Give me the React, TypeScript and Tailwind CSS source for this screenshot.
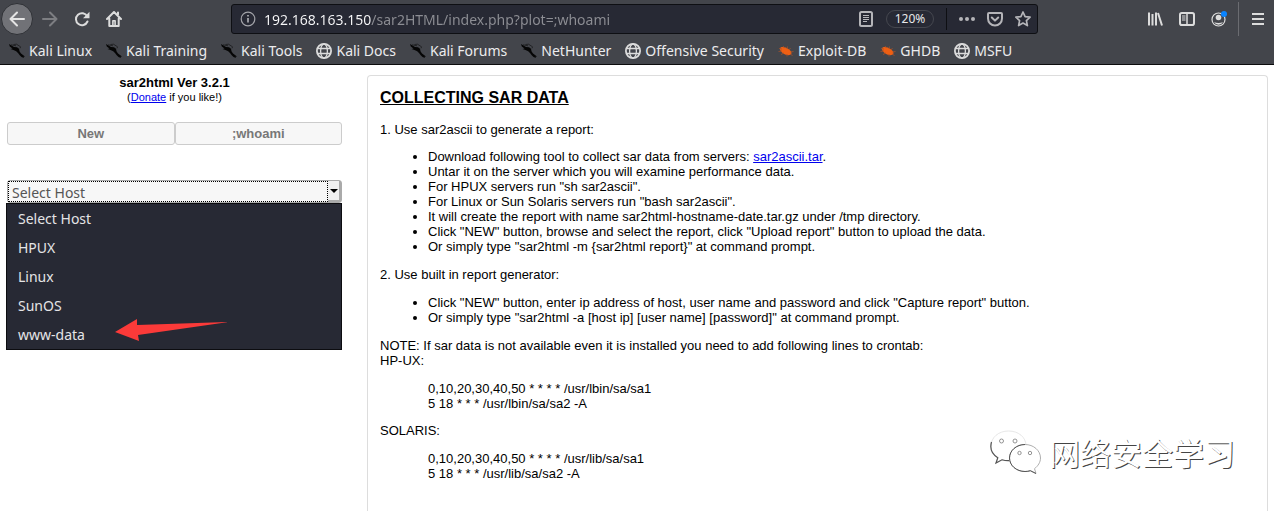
import React from 'react';

type IconKind = 'dragon' | 'globe' | 'bug';

const bookmarks: { label: string; icon: IconKind }[] = [
  { label: 'Kali Linux', icon: 'dragon' },
  { label: 'Kali Training', icon: 'dragon' },
  { label: 'Kali Tools', icon: 'dragon' },
  { label: 'Kali Docs', icon: 'globe' },
  { label: 'Kali Forums', icon: 'dragon' },
  { label: 'NetHunter', icon: 'dragon' },
  { label: 'Offensive Security', icon: 'globe' },
  { label: 'Exploit-DB', icon: 'bug' },
  { label: 'GHDB', icon: 'bug' },
  { label: 'MSFU', icon: 'globe' },
];

const hosts = ['Select Host', 'HPUX', 'Linux', 'SunOS', 'www-data'];

function BookmarkIcon({ kind }: { kind: IconKind }) {
  if (kind === 'globe') {
    return (
      <svg className="size-4 shrink-0" viewBox="0 0 16 16" fill="none" stroke="#dcdcdc" strokeWidth="1.5" aria-hidden="true">
        <circle cx="8" cy="8" r="7.1" strokeWidth="1.8" />
        <ellipse cx="8" cy="8" rx="3.4" ry="7" strokeWidth="1.3" />
        <path d="M1.5 5.5h13M1.5 10.5h13" strokeWidth="1.3" />
      </svg>
    );
  }
  if (kind === 'bug') {
    return (
      <svg className="size-4 shrink-0" viewBox="0 0 16 16" aria-hidden="true">
        <path d="M2.500 4.500C5 3.400 8 4.300 10.500 6c2.200 1.500 3.400 3.200 2.900 4.800-.6 1.500-3.400 1.700-5.600.9C4.900 10.800 1.900 8 2 6z" fill="#ee5f13" />
        <path d="M1 5.500l3 .5M.5 8.500L4 8M3 11.500l3-1.500M5 3l1.500 2M9.500 3.500L9 6M12.500 5L11 7M15.500 8.500l-3 .5M14.500 12.500L12 11M9 13.500L9 11" stroke="#a4522b" strokeWidth=".8" fill="none" />
      </svg>
    );
  }
  return (
    <svg className="size-4 shrink-0" viewBox="0 0 16 16" aria-hidden="true">
      <path d="M0 1l2.500 1.500L5 4l3 .2 2 1.600.5 2.400L12 10.500l4 3-1.500.2.500 1.300-2.500-1-2-2-1.500-2-1.800-1.700L4.500 7 1.500 6l2-.5L.8 3.500z" fill="#050505" />
      <path d="M4.500 1.500l3-.3 2.500 1.600 1.500 1-.5 1.500M2 1.800l5 1" fill="none" stroke="#0c0c0c" strokeWidth=".6" />
    </svg>
  );
}

function ToolButton({ label, children }: { label: string; children: React.ReactNode }) {
  return (
    <button type="button" aria-label={label} className="flex size-8 shrink-0 items-center justify-center">
      {children}
    </button>
  );
}

function Toolbar() {
  return (
    <div className="flex h-[38px] items-center pl-px text-[#dcdcdc]">
      <button type="button" aria-label="Back" className="mr-px flex size-8 shrink-0 items-center justify-center rounded-full border border-[#2f3136] bg-[#717277]">
        <svg className="size-4" viewBox="0 0 16 16" fill="none" stroke="#e4e4e4" strokeWidth="2" strokeLinecap="round" strokeLinejoin="round" aria-hidden="true">
          <path d="M15 8H1.500M8 1.500L1.500 8 8 14.500" />
        </svg>
      </button>
      <ToolButton label="Forward">
        <svg className="size-4" viewBox="0 0 16 16" fill="none" stroke="#7d7e82" strokeWidth="2" strokeLinecap="round" strokeLinejoin="round" aria-hidden="true">
          <path d="M1 8h13.500M8 1.500L14.500 8 8 14.500" />
        </svg>
      </ToolButton>
      <ToolButton label="Reload">
        <svg className="size-4" viewBox="0 0 16 16" fill="none" stroke="currentColor" strokeWidth="2" aria-hidden="true">
          <path d="M13.200 5.200A6 6 0 1 0 13.500 10.500" strokeLinecap="round" />
          <path d="M15.500 .8v6.400H9z" fill="currentColor" stroke="none" />
        </svg>
      </ToolButton>
      <ToolButton label="Home">
        <svg className="size-4" viewBox="0 0 16 16" fill="none" stroke="currentColor" strokeWidth="2" strokeLinecap="round" strokeLinejoin="round" aria-hidden="true">
          <path d="M1 8l7-7 7 7M3.300 7.500V15h9.400V7.500M12 1.500v2" />
          <path d="M6.900 14V9.800h2.200V14" strokeWidth="1.600" />
        </svg>
      </ToolButton>
      <div className="mx-[101px] flex h-[30px] min-w-0 flex-1 items-center rounded-[3px] border border-[#0e0f13] bg-[#272934] pl-2">
        <svg className="mr-2 size-4 shrink-0" viewBox="0 0 16 16" fill="none" stroke="#a3a4a9" strokeWidth="1.200" aria-hidden="true">
          <circle cx="8" cy="8" r="6.800" />
          <path d="M8 7v4.500M8 4v1.600" strokeWidth="1.800" />
        </svg>
        <input
          aria-label="Address"
          defaultValue="192.168.163.150/sar2HTML/index.php?plot=;whoami"
          className="h-7 min-w-0 flex-1 bg-[linear-gradient(90deg,#f9f9fa_107px,#8d8e94_107px)] bg-clip-text text-[14px] text-transparent outline-none"
        />
        <button type="button" aria-label="Reader view" className="mr-3 shrink-0">
          <svg className="size-4" viewBox="0 0 16 16" fill="none" stroke="#b5b5b9" strokeWidth="2" aria-hidden="true">
            <rect x="2" y="1" width="12" height="14" rx="1.500" />
            <path d="M5 4.500h6M5 6.500h6M5 8.500h6M5 10.500h4" strokeWidth="1" />
          </svg>
        </button>
        <button type="button" className="h-[18px] w-12 shrink-0 rounded-full border border-[#45474f] text-[12px] leading-4 text-[#e8e8ea]">120%</button>
        <span className="mx-3 h-[22px] w-px shrink-0 bg-[#0e0f13]" />
        <button type="button" aria-label="Page actions" className="mr-3 shrink-0">
          <svg className="size-4" viewBox="0 0 16 16" fill="#b5b5b9" aria-hidden="true">
            <circle cx="2" cy="8" r="2" />
            <circle cx="8" cy="8" r="2" />
            <circle cx="14" cy="8" r="2" />
          </svg>
        </button>
        <button type="button" aria-label="Save to Pocket" className="mr-3 shrink-0">
          <svg className="size-4" viewBox="0 0 16 16" fill="none" stroke="#b5b5b9" strokeWidth="2" strokeLinecap="round" strokeLinejoin="round" aria-hidden="true">
            <path d="M2 2h12q1 0 1 1v4.500a7 7 0 0 1-14 0V3q0-1 1-1z" />
            <path d="M4.800 6.500L8 9.600l3.200-3.100" />
          </svg>
        </button>
        <button type="button" aria-label="Bookmark this page" className="mr-1.5 shrink-0">
          <svg className="size-4" viewBox="0 0 16 16" fill="none" stroke="#b5b5b9" strokeWidth="1.700" strokeLinejoin="round" aria-hidden="true">
            <path d="M8 1l2.100 4.600 5 .6-3.700 3.400 1 5L8 12.100l-4.400 2.500 1-5L.9 6.200l5-.6z" />
          </svg>
        </button>
      </div>
      <ToolButton label="Library">
        <svg className="size-4" viewBox="0 0 16 16" fill="none" stroke="currentColor" strokeWidth="2" aria-hidden="true">
          <path d="M2 1.500v13M5.500 3v11.500M9 1.500v13M11 2l4 12.500" />
        </svg>
      </ToolButton>
      <ToolButton label="Sidebars">
        <svg className="size-4" viewBox="0 0 16 16" fill="none" stroke="currentColor" strokeWidth="2" aria-hidden="true">
          <rect x="1" y="2" width="14" height="12" rx="1.800" />
          <path d="M8 2v12" strokeWidth="1.500" />
          <path d="M3 5h3.500M3 7h3.500M3 9h3.500" strokeWidth="1" />
        </svg>
      </ToolButton>
      <ToolButton label="Account">
        <svg className="size-4" viewBox="0 0 16 16" fill="none" stroke="currentColor" aria-hidden="true">
          <circle cx="7.500" cy="8.500" r="6.500" strokeWidth="1.200" />
          <circle cx="7.500" cy="6.500" r="2.800" fill="currentColor" stroke="none" />
          <path d="M3 11q1.800 1 4.500 1T12 11q-1.500 2.800-4.500 2.800T3 11z" fill="currentColor" stroke="none" />
          <circle cx="13" cy="3" r="3" fill="#0a84ff" stroke="none" />
        </svg>
      </ToolButton>
      <span className="mx-[3px] h-[34px] w-px shrink-0 bg-[#6b6c71]" />
      <ToolButton label="Open menu">
        <svg className="size-4" viewBox="0 0 16 16" fill="none" stroke="currentColor" strokeWidth="2" aria-hidden="true">
          <path d="M2 3h12M2 8h12M2 13h12" />
        </svg>
      </ToolButton>
    </div>
  );
}

function Bookmarks() {
  return (
    <nav aria-label="Bookmarks" className="flex h-[26px] items-center gap-3.5 pb-px pl-[9px] text-[14px] leading-5 text-[#ececee]">
      {bookmarks.map((b) => (
        <a key={b.label} href="#" className="flex items-center gap-1 whitespace-nowrap">
          <BookmarkIcon kind={b.icon} />
          {b.label}
        </a>
      ))}
    </nav>
  );
}

function HostMenu() {
  return (
    <div className="relative mt-[35px]">
      <div className="flex h-[23px] rounded-[3px] border border-[#aaaaaa] bg-[#f7f7f7]">
        <select aria-label="Host" className="min-w-0 flex-1 appearance-none border border-dotted border-black bg-[#f7f7f7] pl-[3px] text-[14px] text-[#555555] outline-none">
          {hosts.map((h) => (
            <option key={h}>{h}</option>
          ))}
        </select>
        <span className="flex w-[13px] items-center justify-center border-r-2 border-b-2 border-[#aaaaaa] bg-[#f0f0f0]" aria-hidden="true">
          <svg className="h-1 w-2" viewBox="0 0 8 4">
            <path d="M0 0h8L4 4z" fill="#000" />
          </svg>
        </span>
      </div>
      <select aria-label="Start date" disabled className="mt-1.5 block h-[22px] w-full appearance-none rounded-[3px] border border-[#aaaaaa] bg-[#f7f7f7]" />
      <select aria-label="End date" disabled className="mt-1.5 block h-[22px] w-full appearance-none rounded-[3px] border border-[#aaaaaa] bg-[#f7f7f7]" />
      <ul role="listbox" aria-label="Host options" className="absolute top-[23px] right-0 -left-px border border-[#0c0c10] bg-[#272934] text-[14px] leading-[29px] text-[#e4e4e6]">
        {hosts.map((h) => (
          <li key={h} role="option" aria-selected={h === hosts[0]} className="pl-[11px]">
            {h}
          </li>
        ))}
      </ul>
      <svg className="absolute top-[138px] left-[108px] h-6 w-28" viewBox="0 0 112 24" aria-hidden="true">
        <path d="M0 14L22 1v6l91-3L23 17l1 6z" fill="#fb3a39" />
      </svg>
    </div>
  );
}

function Sidebar() {
  return (
    <aside className="w-[335px] shrink-0">
      <h1 className="text-center text-[13px] leading-[15px] font-bold">sar2html Ver 3.2.1</h1>
      <p className="text-center text-[11px] leading-[14px]">
        (<a href="#" className="text-[#0000ee] underline">Donate</a> if you like!)
      </p>
      <div className="mt-[18px] flex text-[13px] font-bold text-[#777777]">
        <button type="button" className="h-[23px] flex-1 rounded-[3px] border border-[#cccccc] bg-[#f7f7f7]">New</button>
        <button type="button" className="h-[23px] flex-1 rounded-[3px] border border-[#cccccc] bg-[#f7f7f7]">;whoami</button>
      </div>
      <HostMenu />
    </aside>
  );
}

function Watermark() {
  return (
    <div className="absolute top-[354px] right-8 flex items-center gap-2">
      <svg className="h-11 w-[51px]" viewBox="0 0 51 44" fill="#fff" aria-hidden="true">
        <path d="M18.500 1C8.500 1 1 7.500 1 16c0 5 2.500 9 6.800 11.800L6 33l6-3.200c2 .6 4 .9 6.500.9 9.500 0 17.500-6.500 17.500-15S28.500 1 18.500 1z" stroke="#dddddd" strokeWidth=".7" />
        <path d="M1.500 12C-.5 19 2.500 24.500 7.800 27.800L6 33l6-3.200q3 1 7 .9" fill="none" stroke="#555" strokeWidth="1.200" />
        <path d="M35 14.500c-8.500 0-15.500 6-15.500 13.500S26.500 41.500 35 41.500c2 0 3.700-.2 5.300-.8L46 43.500l-1.500-4.800C48 36 50.500 32.300 50.500 28c0-7.500-7-13.500-15.500-13.500z" stroke="#999" strokeWidth=".8" />
        <path d="M35 14.500c-8.500 0-15.500 6-15.500 13.500S26.500 41.500 35 41.500q3 0 5.300-.8L46 43.500" fill="none" stroke="#555" strokeWidth="1" />
        <g fill="none" stroke="#888" strokeWidth=".9">
          <circle cx="11.500" cy="11" r="2" />
          <circle cx="25" cy="11" r="2" />
          <circle cx="29.500" cy="23" r="1.700" />
          <circle cx="40" cy="23" r="1.700" />
        </g>
      </svg>
      <span className="font-['Noto_Sans_CJK_SC',sans-serif] text-[31px] leading-10 whitespace-nowrap text-white [text-shadow:1px_1px_0_#444]">网络安全学习</span>
    </div>
  );
}

function Instructions() {
  return (
    <main className="relative min-w-0 flex-1 rounded-t border border-b-0 border-[#dddddd] px-3 pt-3 text-[13px] leading-[15px]">
      <h2 className="text-[16px] leading-5 font-bold underline">COLLECTING SAR DATA</h2>
      <p className="mt-[14px]">1. Use sar2ascii to generate a report:</p>
      <ul className="mt-3 list-disc pl-12">
        <li>
          Download following tool to collect sar data from servers: <a href="#" className="text-[#0000ee] underline">sar2ascii.tar</a>.
        </li>
        <li>Untar it on the server which you will examine performance data.</li>
        <li>For HPUX servers run "sh sar2ascii".</li>
        <li>For Linux or Sun Solaris servers run "bash sar2ascii".</li>
        <li>It will create the report with name sar2html-hostname-date.tar.gz under /tmp directory.</li>
        <li>Click "NEW" button, browse and select the report, click "Upload report" button to upload the data.</li>
        <li>Or simply type "sar2html -m {'{'}sar2html report{'}'}" at command prompt.</li>
      </ul>
      <p className="mt-[13px]">2. Use built in report generator:</p>
      <ul className="mt-[13px] list-disc pl-12">
        <li>Click "NEW" button, enter ip address of host, user name and password and click "Capture report" button.</li>
        <li>Or simply type "sar2html -a [host ip] [user name] [password]" at command prompt.</li>
      </ul>
      <p className="mt-[13px]">NOTE: If sar data is not available even it is installed you need to add following lines to crontab:</p>
      <p>HP-UX:</p>
      <div className="mt-[13px] pl-12">
        <p>0,10,20,30,40,50 * * * * /usr/lbin/sa/sa1</p>
        <p>5 18 * * * /usr/lbin/sa/sa2 -A</p>
      </div>
      <p className="mt-3">SOLARIS:</p>
      <div className="mt-[13px] pl-12">
        <p>0,10,20,30,40,50 * * * * /usr/lib/sa/sa1</p>
        <p>5 18 * * * /usr/lib/sa/sa2 -A</p>
      </div>
      <Watermark />
    </main>
  );
}

export default function App() {
  return (
    <div className="flex min-h-screen flex-col bg-white font-['Noto_Sans',sans-serif]">
      <header className="border-b border-[#0c0c0d] bg-[#43454b]">
        <Toolbar />
        <Bookmarks />
      </header>
      <div className="flex flex-1 gap-[25px] pt-[10px] pr-1.5 pl-[7px] text-black [&_h1]:font-['Liberation_Sans',sans-serif] [&_p]:font-['Liberation_Sans',sans-serif] [&_aside_button]:font-['Liberation_Sans',sans-serif] [&_main]:font-['Liberation_Sans',sans-serif]">
        <Sidebar />
        <Instructions />
      </div>
    </div>
  );
}
